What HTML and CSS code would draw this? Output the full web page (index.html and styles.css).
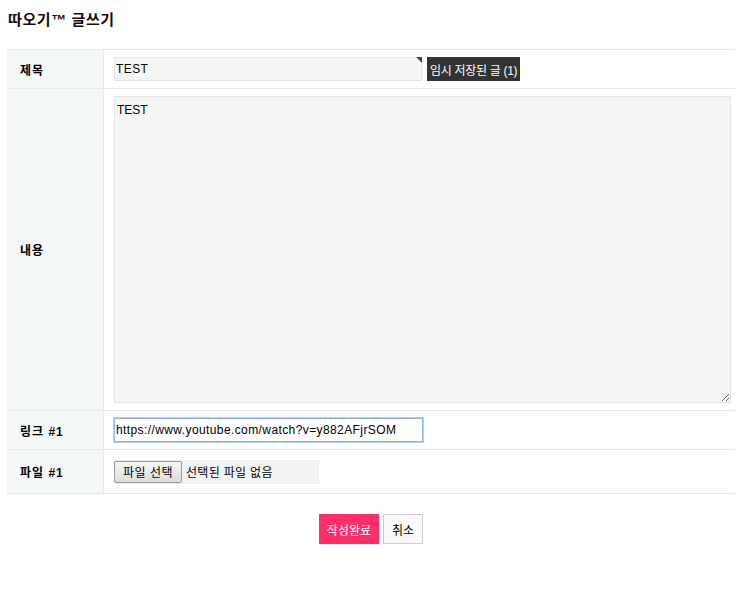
FILE: index.html
```html
<!DOCTYPE html>
<html lang="ko">
<head>
    <meta charset="UTF-8">
    <title>따오기™ 글쓰기</title>
    <link rel="stylesheet" href="styles.css">
</head>
<body>
    <div class="wrap">
        <h2 class="page-title">따오기™ 글쓰기</h2>
        <form class="write-form">
            <table class="write-table">
                <tr class="row-subject">
                    <th>제목</th>
                    <td>
                        <div class="subject-line">
                            <span class="subject-box">
                                <input type="text" class="input subject" value="TEST">
                            </span>
                            <button type="button" class="btn-temp">임시 저장된 글 (1)</button>
                        </div>
                    </td>
                </tr>
                <tr class="row-content">
                    <th>내용</th>
                    <td><textarea class="content">TEST</textarea></td>
                </tr>
                <tr class="row-link">
                    <th>링크 #1</th>
                    <td><input type="text" class="input link focused" value="https://www.youtube.com/watch?v=y882AFjrSOM"></td>
                </tr>
                <tr class="row-file">
                    <th>파일 #1</th>
                    <td>
                        <span class="file-box">
                            <button type="button" class="btn-file">파일 선택</button>
                            <span class="file-name">선택된 파일 없음</span>
                        </span>
                    </td>
                </tr>
            </table>
            <div class="actions">
                <button type="button" class="btn-submit">작성완료</button>
                <button type="button" class="btn-cancel">취소</button>
            </div>
        </form>
    </div>
</body>
</html>
```

FILE: styles.css
```css
body {
    margin: 0;
    font-family: "Liberation Sans", "Noto Sans CJK KR", sans-serif;
    font-size: 12px;
    color: #000;
    background: #fff;
}
.wrap {
    padding: 0 10px 0 7px;
}
.page-title {
    margin: 0;
    padding: 10px 0 19px 1px;
    font-size: 15px;
    line-height: 20px;
    font-weight: bold;
    letter-spacing: 0.6px;
    color: #1a0a0a;
}
.write-table {
    width: 100%;
    border-collapse: collapse;
    border-top: 1px solid #e6e9eb;
}
.write-table th {
    width: 84px;
    padding: 0 0 0 13px;
    text-align: left;
    font-size: 12px;
    font-weight: bold;
    letter-spacing: 1px;
    background: #f3f7f8;
    border-bottom: 1px solid #e6e9eb;
    border-right: 1px solid #e6e9eb;
}
.write-table td {
    padding: 0 4px 0 10px;
    border-bottom: 1px solid #e6e9eb;
}
.row-subject td,
.row-link td {
    height: 38px;
}
.row-content td {
    padding-top: 7px;
    padding-bottom: 7px;
}
.row-file td {
    height: 43px;
}
.subject-line {
    display: flex;
    align-items: center;
    gap: 5px;
}
.subject-box {
    position: relative;
    display: block;
}
.subject-box::after {
    content: "";
    position: absolute;
    top: 0;
    right: 0;
    border-top: 6px solid #444;
    border-left: 6px solid transparent;
}
.input {
    display: block;
    box-sizing: border-box;
    height: 24px;
    padding: 0 1px;
    border: 1px solid #e3e6e6;
    background: #f5f5f5;
    font-family: "Liberation Sans", "Noto Sans CJK KR", sans-serif;
    font-size: 12px;
    letter-spacing: 0.4px;
    color: #000;
    outline: none;
}
.subject {
    width: 308px;
}
.link {
    width: 309px;
    background: #fff;
}
.focused {
    border: 1px solid #8fb2f2;
    box-shadow: 0 0 0 1px #b8cff7;
}
.btn-temp {
    height: 24px;
    padding: 0 3px;
    border: none;
    background: #333;
    color: #fff;
    font-family: "Liberation Sans", "Noto Sans CJK KR", sans-serif;
    font-size: 12px;
    letter-spacing: -0.3px;
}
.content {
    display: block;
    box-sizing: border-box;
    width: 617px;
    height: 307px;
    padding: 6px 2px;
    border: 1px solid #e3e6e6;
    background: #f5f5f5;
    font-family: "Liberation Sans", "Noto Sans CJK KR", sans-serif;
    font-size: 12px;
    color: #000;
    resize: both;
}
.file-box {
    display: flex;
    align-items: center;
    box-sizing: border-box;
    width: 205px;
    height: 24px;
    background: #f3f3f3;
    border: 1px solid #eceeee;
    border-left: none;
}
.btn-file {
    height: 22px;
    padding: 0 8px;
    border: 1px solid #9a9a9a;
    border-radius: 2px;
    background: linear-gradient(#f6f6f6, #dddddd);
    font-family: "Noto Sans CJK KR", sans-serif;
    font-size: 12px;
    letter-spacing: 0.5px;
    color: #000;
}
.file-name {
    margin-left: 4px;
    font-family: "Noto Sans CJK KR", sans-serif;
    font-size: 12px;
    letter-spacing: 0.3px;
}
.actions {
    display: flex;
    justify-content: center;
    gap: 4px;
    padding-top: 20px;
}
.btn-submit {
    height: 30px;
    padding: 0 8px;
    border: none;
    background: #ff2e69;
    color: #fff;
    font-family: "Noto Sans CJK KR", sans-serif;
    font-size: 12px;
}
.btn-cancel {
    height: 30px;
    padding: 0 8px;
    border: 1px solid #cccccc;
    background: #f9f9f9;
    color: #000;
    font-family: "Noto Sans CJK KR", sans-serif;
    font-size: 12px;
}
```
